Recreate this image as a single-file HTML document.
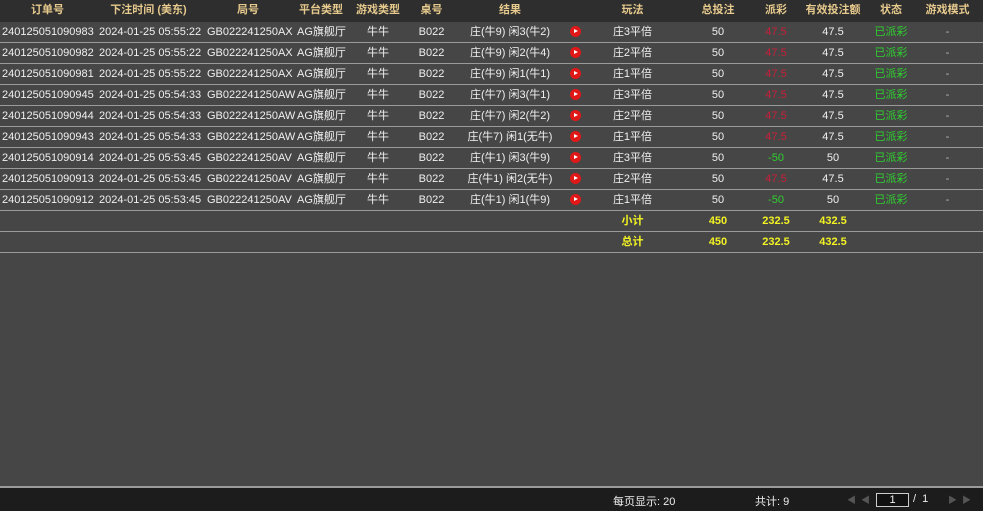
<!DOCTYPE html>
<html><head><meta charset="utf-8"><style>
*{margin:0;padding:0;box-sizing:border-box}
body{width:983px;height:511px;background:#464646;font-family:"Liberation Sans","Noto Sans CJK SC",sans-serif;font-size:11px;color:#f0f0f0;position:relative;overflow:hidden}
.hd{position:absolute;left:0;top:0;width:983px;height:22px;background:#2e2e2e;color:#e6c98c;font-weight:bold}
.r{position:absolute;left:0;width:983px;height:21px;border-bottom:1px solid #9a9a9a}
.c{position:absolute;top:0;height:20px;line-height:20px;text-align:center;white-space:nowrap}
.l{text-align:left}
.red{color:#c8203a}.grn{color:#2ed12e}.yl{color:#f2f224;font-weight:bold}
.ic{display:inline-block;width:11px;height:11px;border-radius:50%;background:#e01818;vertical-align:middle;position:relative;top:-1px}
.ic:after{content:"";position:absolute;left:4px;top:3px;border-left:4px solid #fff;border-top:2.5px solid transparent;border-bottom:2.5px solid transparent}
.ft{position:absolute;left:0;top:486px;width:983px;height:25px;background:#1c1c1c;border-top:2px solid #9a9a9a;color:#eee}
</style></head><body>
<div class="hd">
<div class="c" style="left:0;width:95px;line-height:21px">订单号</div>
<div class="c" style="left:95px;width:107px;line-height:21px">下注时间 (美东)</div>
<div class="c" style="left:202px;width:92px;line-height:21px">局号</div>
<div class="c" style="left:294px;width:54px;line-height:21px">平台类型</div>
<div class="c" style="left:348px;width:60px;line-height:21px">游戏类型</div>
<div class="c" style="left:408px;width:47px;line-height:21px">桌号</div>
<div class="c" style="left:455px;width:110px;line-height:21px">结果</div>
<div class="c" style="left:585px;width:95px;line-height:21px">玩法</div>
<div class="c" style="left:680px;width:76px;line-height:21px">总投注</div>
<div class="c" style="left:756px;width:40px;line-height:21px">派彩</div>
<div class="c" style="left:796px;width:74px;line-height:21px">有效投注额</div>
<div class="c" style="left:870px;width:42px;line-height:21px">状态</div>
<div class="c" style="left:912px;width:71px;line-height:21px">游戏模式</div>
</div>

<div id="rows"></div>
<script>
var d=[
["240125051090983","2024-01-25 05:55:22","GB022241250AX","庄(牛9) 闲3(牛2)","庄3平倍","47.5","red","47.5"],
["240125051090982","2024-01-25 05:55:22","GB022241250AX","庄(牛9) 闲2(牛4)","庄2平倍","47.5","red","47.5"],
["240125051090981","2024-01-25 05:55:22","GB022241250AX","庄(牛9) 闲1(牛1)","庄1平倍","47.5","red","47.5"],
["240125051090945","2024-01-25 05:54:33","GB022241250AW","庄(牛7) 闲3(牛1)","庄3平倍","47.5","red","47.5"],
["240125051090944","2024-01-25 05:54:33","GB022241250AW","庄(牛7) 闲2(牛2)","庄2平倍","47.5","red","47.5"],
["240125051090943","2024-01-25 05:54:33","GB022241250AW","庄(牛7) 闲1(无牛)","庄1平倍","47.5","red","47.5"],
["240125051090914","2024-01-25 05:53:45","GB022241250AV","庄(牛1) 闲3(牛9)","庄3平倍","-50","grn","50"],
["240125051090913","2024-01-25 05:53:45","GB022241250AV","庄(牛1) 闲2(无牛)","庄2平倍","47.5","red","47.5"],
["240125051090912","2024-01-25 05:53:45","GB022241250AV","庄(牛1) 闲1(牛9)","庄1平倍","-50","grn","50"]];
var h="";
d.forEach(function(r,i){
h+='<div class="r" style="top:'+(22+i*21)+'px">'+
'<div class="c l" style="left:2px">'+r[0]+'</div>'+
'<div class="c l" style="left:99px">'+r[1]+'</div>'+
'<div class="c l" style="left:207px">'+r[2]+'</div>'+
'<div class="c l" style="left:297px">AG旗舰厅</div>'+
'<div class="c" style="left:348px;width:60px">牛牛</div>'+
'<div class="c" style="left:408px;width:47px">B022</div>'+
'<div class="c" style="left:455px;width:110px">'+r[3]+'</div>'+
'<div class="c" style="left:565px;width:20px"><span class="ic"></span></div>'+
'<div class="c" style="left:585px;width:95px">'+r[4]+'</div>'+
'<div class="c" style="left:680px;width:76px">50</div>'+
'<div class="c '+r[6]+'" style="left:756px;width:40px">'+r[5]+'</div>'+
'<div class="c" style="left:796px;width:74px">'+r[7]+'</div>'+
'<div class="c grn" style="left:870px;width:42px">已派彩</div>'+
'<div class="c" style="left:912px;width:71px;color:#bbb">-</div></div>';});
["小计","总计"].forEach(function(t,j){
h+='<div class="r" style="top:'+(22+(9+j)*21)+'px">'+
'<div class="c yl" style="left:585px;width:95px">'+t+'</div>'+
'<div class="c yl" style="left:680px;width:76px">450</div>'+
'<div class="c yl" style="left:756px;width:40px">232.5</div>'+
'<div class="c yl" style="left:796px;width:74px">432.5</div></div>';});
document.getElementById("rows").innerHTML=h;
</script>
<div class="ft">
<div style="position:absolute;left:613px;top:5px">每页显示: 20</div>
<div style="position:absolute;left:755px;top:5px">共计: 9</div>
<div style="position:absolute;left:847px;top:5px;color:#555;font-size:9px">◀ &nbsp;◀</div>
<div style="position:absolute;left:876px;top:5px;width:33px;height:14px;border:1px solid #ccc;background:#111;text-align:center;line-height:12px">1</div>
<div style="position:absolute;left:913px;top:5px">/ &nbsp;1</div>
<div style="position:absolute;left:948px;top:5px;color:#555;font-size:9px">▶ &nbsp;▶</div>
</div>
</body></html>
